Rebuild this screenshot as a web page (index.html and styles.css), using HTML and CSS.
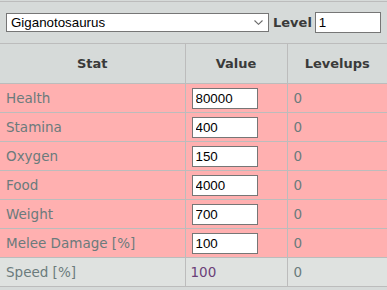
FILE: index.html
```html
<!DOCTYPE html>
<html lang="en">
<head>
    <meta charset="UTF-8">
    <meta name="viewport" content="width=device-width, initial-scale=1.0">
    <title>Dino stats</title>
    <link rel="stylesheet" href="styles.css">
</head>
<body>
    <div class="toolbar">
        <span class="select-wrap">
            <select id="species" class="species">
                <option>Giganotosaurus</option>
            </select>
            <svg class="chevron" width="9" height="5" viewBox="0 0 9 5">
                <path d="M0.5 0.5 L4.5 4.3 L8.5 0.5" fill="none" stroke="#6a6a6a" stroke-width="1.1"/>
            </svg>
        </span>
        <label for="level" class="level-label">Level</label>
        <input type="text" id="level" class="level-input" value="1">
    </div>
    <table class="stats">
        <colgroup>
            <col class="col-stat">
            <col class="col-value">
            <col class="col-levelups">
        </colgroup>
        <thead>
            <tr>
                <th>Stat</th>
                <th>Value</th>
                <th>Levelups</th>
            </tr>
        </thead>
        <tbody>
            <tr class="changed">
                <td class="name">Health</td>
                <td class="value"><input type="text" class="stat-input" value="80000"></td>
                <td class="ups">0</td>
            </tr>
            <tr class="changed">
                <td class="name">Stamina</td>
                <td class="value"><input type="text" class="stat-input" value="400"></td>
                <td class="ups">0</td>
            </tr>
            <tr class="changed">
                <td class="name">Oxygen</td>
                <td class="value"><input type="text" class="stat-input" value="150"></td>
                <td class="ups">0</td>
            </tr>
            <tr class="changed">
                <td class="name">Food</td>
                <td class="value"><input type="text" class="stat-input" value="4000"></td>
                <td class="ups">0</td>
            </tr>
            <tr class="changed">
                <td class="name">Weight</td>
                <td class="value"><input type="text" class="stat-input" value="700"></td>
                <td class="ups">0</td>
            </tr>
            <tr class="changed">
                <td class="name">Melee Damage [%]</td>
                <td class="value"><input type="text" class="stat-input" value="100"></td>
                <td class="ups">0</td>
            </tr>
            <tr>
                <td class="name">Speed [%]</td>
                <td class="value fixed">100</td>
                <td class="ups">0</td>
            </tr>
        </tbody>
    </table>
</body>
</html>
```

FILE: styles.css
```css
:root {
    --bg-color: #d6dad9;
    --row-color: #dfe2e0;
    --changed-color: #ffb0b0;
    --line-color: #bcbcbc;
    --label-color: #6b7b7c;
}
body {
    margin: 0;
    font-family: "DejaVu Sans", sans-serif;
    font-size: 13.5px;
    background-color: var(--bg-color);
}
.toolbar {
    margin-top: 1px;
    height: 41px;
    display: flex;
    align-items: center;
    padding: 0 6px;
    border-top: 1px solid var(--line-color);
    border-bottom: 1px solid var(--line-color);
}
.select-wrap {
    position: relative;
    display: flex;
}
.species {
    appearance: none;
    box-sizing: border-box;
    width: 263px;
    height: 19px;
    font-family: "Liberation Sans", Arial, sans-serif;
    font-size: 13.33px;
    color: #000;
    background-color: #fff;
    border: 1px solid #767676;
    border-radius: 0;
    padding: 0 4px;
}
.chevron {
    position: absolute;
    right: 6px;
    top: 7px;
    pointer-events: none;
}
.level-label {
    margin: 0 3px 0 4px;
    font-size: 13px;
    font-weight: bold;
    color: #3a3a3a;
}
.level-input {
    box-sizing: border-box;
    width: 66px;
    height: 21px;
    font-family: "Liberation Sans", Arial, sans-serif;
    font-size: 13.33px;
    border: 1px solid #767676;
    padding: 1px 3px;
}
.stats {
    width: 100%;
    border-collapse: collapse;
    table-layout: fixed;
}
.col-stat {
    width: 185px;
}
.col-value {
    width: 102px;
}
.stats th {
    height: 39px;
    padding: 0;
    font-size: 13px;
    font-weight: bold;
    color: #3a3a3a;
    border-bottom: 1px solid var(--line-color);
    border-left: 1px solid var(--line-color);
}
.stats th:first-child,
.stats td:first-child {
    border-left: none;
}
.stats td {
    height: 28px;
    padding: 0 6px;
    color: var(--label-color);
    background-color: var(--row-color);
    border-bottom: 1px solid var(--line-color);
    border-left: 1px solid var(--line-color);
}
.stats tr.changed td {
    background-color: var(--changed-color);
}
.stats td.fixed {
    padding-left: 5px;
    color: #6b3f78;
}
.stat-input {
    box-sizing: border-box;
    width: 66px;
    height: 21px;
    font-family: "Liberation Sans", Arial, sans-serif;
    font-size: 13.33px;
    border: 1px solid #767676;
    padding: 1px 3px;
    vertical-align: middle;
}
```
